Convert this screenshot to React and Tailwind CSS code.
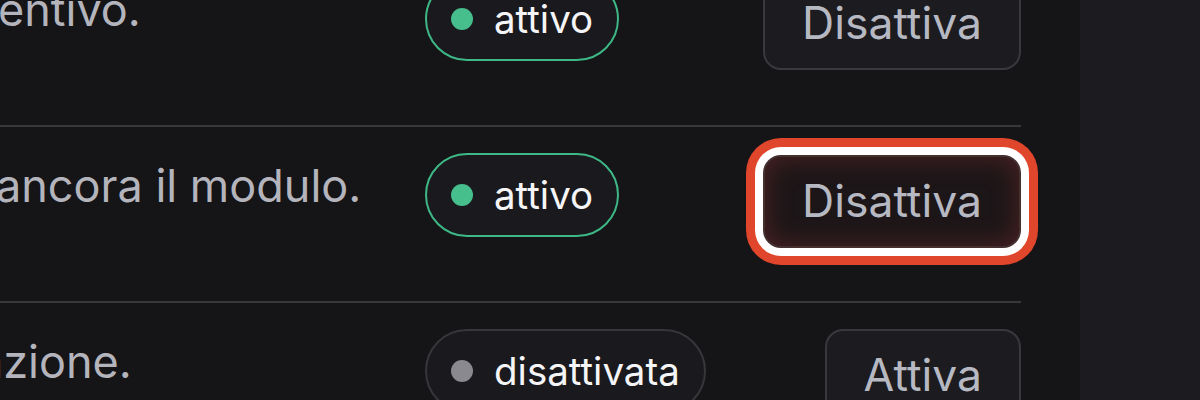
import React from "react";

const rows = [
  { text: "entivo.", offset: "-ml-[2px]", status: "on", action: "Disattiva" },
  { text: "ancora il modulo.", offset: "-ml-[4px]", status: "on", action: "Disattiva", focused: true },
  { text: "azione.", offset: "-ml-[22px]", status: "off", action: "Attiva" },
];

function Badge({ on }) {
  return (
    <span
      className={
        on
          ? "inline-flex h-[84px] items-center gap-[21px] rounded-full border-2 border-[#3db886] bg-[#1a191d] pl-[24px] pr-[24px]"
          : "inline-flex h-[84px] items-center gap-[21px] rounded-full border-2 border-[#37363b] bg-[#1a191d] pl-[24px] pr-[24px]"
      }
    >
      <span className={on ? "h-[22px] w-[22px] rounded-full bg-[#46bf8c]" : "h-[22px] w-[22px] rounded-full bg-[#8a8990]"} />
      <span className="text-[38.5px] leading-none text-[#f5f5f7]">{on ? "attivo" : "disattivata"}</span>
    </span>
  );
}

function ActionButton({ label, focused }) {
  if (focused) {
    return (
      <button className="mt-[2px] h-[93px] rounded-[18px] border-2 border-[#45302f] bg-[#1d1618] px-[37px] text-[44.5px] leading-none text-[#b6b8c2] shadow-[inset_0_0_26px_rgba(120,45,45,0.55),0_0_0_8px_#ffffff,0_0_0_17px_#e0462b]">
        {label}
      </button>
    );
  }
  return (
    <button className="h-[93px] rounded-[18px] border-2 border-[#39383d] bg-[#1c1b1f] px-[37px] text-[44.5px] leading-none text-[#b6b8c2]">
      {label}
    </button>
  );
}

export default function App() {
  return (
    <div
      className="flex h-[400px] w-[1200px] overflow-hidden bg-[#151417]"
      style={{ fontFamily: "Inter, 'Noto Sans', sans-serif" }}
    >
      <div className="w-[1080px] shrink-0">
        <div className="-mt-[49px] w-[1021px]">
          {rows.map((r, i) => (
            <div
              key={i}
              className="box-border grid h-[176px] grid-cols-[395px_1fr_auto] items-start gap-x-[30px] border-b-2 border-[#38373c] pt-[26px]"
            >
              <div className={"mt-[6px] whitespace-nowrap text-[45px] leading-[54px] text-[#b4b4bc] " + r.offset}>
                {r.text}
              </div>
              <div>
                <Badge on={r.status === "on"} />
              </div>
              <div className="flex justify-end">
                <ActionButton label={r.action} focused={r.focused} />
              </div>
            </div>
          ))}
        </div>
      </div>
      <div className="flex-1 bg-[#1c1b1f]" />
    </div>
  );
}
